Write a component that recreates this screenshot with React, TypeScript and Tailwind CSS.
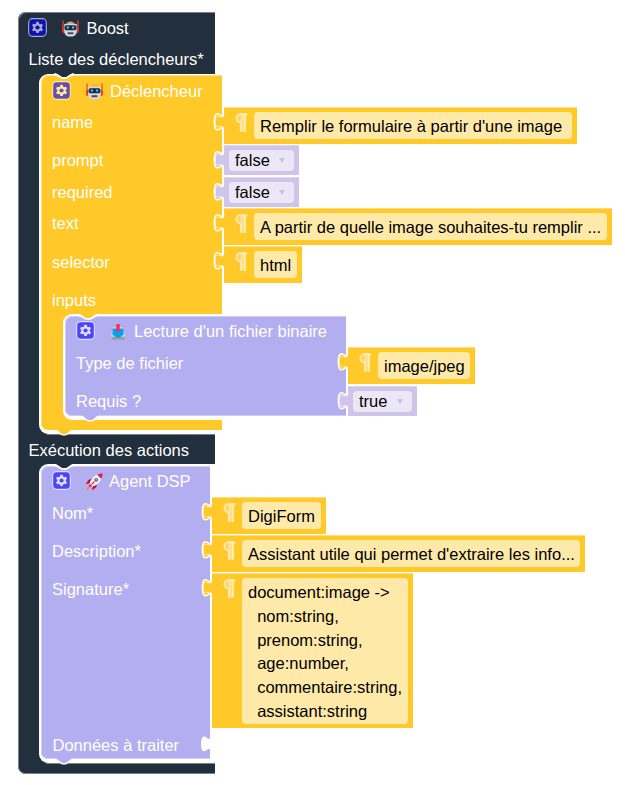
import React from "react";

function Gear({ fill, line }: { fill: string; line: string }) {
  return (
    <svg width="19" height="19" viewBox="-0.6 -0.6 17.2 17.2" className="-mt-[2px] block shrink-0">
      <rect width="16" height="16" rx="3.6" fill={fill} stroke={line} />
      <path
        fill={line}
        d="m4.203,7.296 0,1.368 -0.92,0.677 -0.11,0.41 0.9,1.559 0.41,0.11 1.043,-0.457 1.187,0.683 0.127,1.134 0.3,0.3 1.8,0 0.3,-0.299 0.127,-1.138 1.185,-0.682 1.046,0.458 0.409,-0.11 0.9,-1.559 -0.11,-0.41 -0.92,-0.677 0,-1.366 0.92,-0.677 0.11,-0.41 -0.9,-1.559 -0.409,-0.109 -1.046,0.458 -1.185,-0.682 -0.127,-1.138 -0.3,-0.299 -1.8,0 -0.3,0.3 -0.126,1.135 -1.187,0.682 -1.043,-0.457 -0.41,0.11 -0.899,1.559 0.108,0.409z"
      />
      <circle cx="8" cy="8" r="1.9" fill={fill} />
    </svg>
  );
}

function Robot() {
  return (
    <svg width="17" height="17" viewBox="0 0 18 18" className="block shrink-0">
      <path d="M4.5 3.8Q9-.8 13.5 3.8z" fill="#f9a825" />
      <path d="M1.1.5v9M16.9.5v9" stroke="#f0443a" strokeWidth="1.3" />
      <rect x="0.2" y="7.5" width="2.6" height="6" rx="1" fill="#e8342f" />
      <rect x="15.2" y="7.5" width="2.6" height="6" rx="1" fill="#e8342f" />
      <path d="M2.4 4.3Q9 2.4 15.6 4.3V13Q14.4 17 11.4 17.4H6.6Q3.6 17 2.4 13z" fill="#d3d5df" />
      <rect x="2.8" y="5.5" width="12.4" height="5.3" rx="2" fill="#17283a" />
      <circle cx="6.2" cy="8" r="1.4" fill="#35b8f2" />
      <circle cx="11.8" cy="8" r="1.4" fill="#35b8f2" />
      <rect x="5.8" y="13" width="6.4" height="2" rx="0.7" fill="#4a4c58" />
    </svg>
  );
}

function Inbox() {
  return (
    <svg width="16" height="18" viewBox="0 0 16 18" className="block shrink-0">
      <path d="M2.8 4.5h10.4L14.6 12v3.5H1.4V12z" fill="#e3e4ea" />
      <path d="M1.4 13.6h13.2v3H1.4z" fill="#9b9ba1" />
      <path d="M2.4 5.5h11.2V12L11.4 13l-1.6 1.8H6.2L4.6 13 2.4 12z" fill="#00a6ed" />
      <path d="M6.3 1h3.4v5.2h1.8L8 9.2 4.5 6.2h1.8z" fill="#fb2d5c" />
    </svg>
  );
}

function Rocket() {
  return (
    <svg width="18" height="18" viewBox="0 0 18 18" className="block shrink-0">
      <path d="M4.4 11L.8 17.4 6.8 13.6z" fill="#ff822d" />
      <path d="M7.4 5.6L3.4 7 .8 11.2 5.4 10zM12.4 10.6l-1.4 4-4 2.6L8 12.6z" fill="#ca0b4a" />
      <path d="M4.6 11Q6 4.2 12.6 1.6L16.4 5.4Q14 12 7 13.4z" fill="#f4f4f6" />
      <path d="M12.2 1.8Q14.6.4 17.6.4 17.6 3.4 16.2 5.8z" fill="#e01b52" />
      <path d="M4.8 11l2.2 2.2-1.4.6-1.4-1.4z" fill="#ca0b4a" />
      <circle cx="11.2" cy="6.8" r="1.9" fill="#46536d" />
      <circle cx="11.2" cy="6.8" r="1" fill="#83cbff" />
      <path d="M6.4 11.6l3-3" stroke="#ca0b4a" strokeWidth="1.2" />
    </svg>
  );
}

/* Connector drawn on the left side of a value block */
function Tab({ fill }: { fill: string }) {
  return (
    <svg width="13" height="22" viewBox="0 0 13 22" className="absolute -left-[11px] top-[3px]">
      <path d="M11 2.5c0 11-8.8-8.8-8.8 8.25s8.8-2.75 8.8 8.25" fill="none" stroke="#fffdf5" strokeWidth="3.2" />
      <path d="M13 2.5H11c0 11-8.8-8.8-8.8 8.25s8.8-2.75 8.8 8.25H13z" fill={fill} />
      <path d="M10.5 4.5c-1.5 5.5-8.3-5.5-8.3 6.25 0 8 4 4 7 5" fill="none" stroke="#fff" strokeOpacity=".6" />
    </svg>
  );
}

/* Notch cut in the top edge of a statement block */
function Notch({ fill }: { fill: string }) {
  return (
    <svg width="20" height="6" viewBox="0 0 20 6" className="absolute left-[13px] -top-[2px]">
      <path d="M0 1.3h2l6.2 3.4h4l6-3.4h2" fill="none" stroke="#fff" strokeWidth="2.2" />
      <path d="M2 0l6 3.9h4.2l6-3.9z" fill={fill} />
    </svg>
  );
}

/* Tongue that hangs under the bottom edge of a statement block */
function Tongue({ fill, place = "-bottom-[6px] left-[13px]" }: { fill: string; place?: string }) {
  return (
    <svg width="20" height="7" viewBox="0 0 20 7" className={`absolute ${place}`}>
      <path d="M0 4h4l4 2.6h4L16 4h4V1H0z" fill="#fff" />
      <path d="M1.5 0l6.5 5h4l6.5-5z" fill={fill} />
    </svg>
  );
}

function TextValue({ children, w, h = "h-[37px]", fieldH = "h-[27px]" }: { children: React.ReactNode; w: string; h?: string; fieldH?: string }) {
  return (
    <div className={`relative flex shrink-0 items-start border-t border-[#ffdc7c] bg-[#ffc929] pt-[4px] pr-[5px] pl-[11px] ${w} ${h}`}>
      <Tab fill="#ffc929" />
      <span className="w-[19px] shrink-0 font-['DejaVu_Serif',serif] text-[20px] leading-[21px] text-[#ffd75f] [-webkit-text-stroke:1.4px_#ffebb8]">¶</span>
      <div className={`flex-1 rounded-[4px] bg-[#ffe9a9] pl-[6px] text-[16.5px] leading-[23.8px] whitespace-pre text-black ${fieldH}`}>
        <div className="pt-[3px]">{children}</div>
      </div>
    </div>
  );
}

function Choice({ children, w }: { children: string; w: string }) {
  return (
    <div className={`relative h-[30px] shrink-0 border-t border-[#ded6ee] bg-[#d0c4e8] pt-[4px] pr-[5px] pl-[5px] ${w}`}>
      <Tab fill="#d0c4e8" />
      <div className="flex h-[21px] items-center justify-between rounded-[4px] bg-[#ece7f6] pr-[9px] pl-[6px] text-[16.5px] text-black">
        <span>{children}</span>
        <span className="h-0 w-0 border-x-[3.5px] border-t-[5px] border-x-transparent border-t-[#cdc0e6]" />
      </div>
    </div>
  );
}

function Row({ label, h, labelW, pad = "pt-[3px]", children }: { label: string; h: string; labelW: string; pad?: string; children?: React.ReactNode }) {
  return (
    <div className={`flex items-start ${h}`}>
      <span className={`shrink-0 pl-[11px] leading-[24px] ${pad} ${labelW}`}>{label}</span>
      {children}
    </div>
  );
}

export default function App() {
  return (
    <main className="h-[785px] w-[625px] overflow-hidden bg-white pt-[12px] pl-[18px] font-['Liberation_Sans',Arial,sans-serif] text-[16.5px] text-white">
      <section className="w-[197px] rounded-l-[8px] bg-[#222f3c] shadow-[inset_1px_1px_0_#7a838b,inset_0_-1px_0_#7a838b]">
        <header className="flex h-[32px] items-center pl-[10px]">
          <Gear fill="#0d12ad" line="#a4a9d2" />
          <span className="ml-[15px]"><Robot /></span>
          <span className="ml-[7.5px]">Boost</span>
        </header>
        <div className="h-[30px] pl-[10.5px] leading-[31px] whitespace-nowrap">Liste des déclencheurs*</div>

        <div className="ml-[21px] rounded-l-[9px] bg-white pt-px pb-[4px] pl-[2px]">
          <section className="relative w-[181px] rounded-l-[7px] bg-[#ffc929] shadow-[inset_1px_1px_0_#ffe08a]">
            <Notch fill="#222f3c" />
            <header className="flex h-[32px] items-center pl-[11px]">
              <Gear fill="#6650a5" line="#ffe9a9" />
              <span className="ml-[15px]"><Robot /></span>
              <span className="ml-[7px]">Déclencheur</span>
            </header>
            <Row label="name" h="h-[38px]" labelW="w-[183px]">
              <TextValue w="w-[353px]">Remplir le formulaire à partir d'une image</TextValue>
            </Row>
            <Row label="prompt" h="h-[32px]" labelW="w-[183px]"><Choice w="w-[75px]">false</Choice></Row>
            <Row label="required" h="h-[31px]" labelW="w-[183px]"><Choice w="w-[75px]">false</Choice></Row>
            <Row label="text" h="h-[38px]" labelW="w-[183px]">
              <TextValue w="w-[388px]">A partir de quelle image souhaites-tu remplir ...</TextValue>
            </Row>
            <Row label="selector" h="h-[38px]" labelW="w-[183px]" pad="pt-[4px]"><TextValue w="w-[78px]">html</TextValue></Row>
            <Row label="inputs" h="h-[30px]" labelW="w-[181px]" pad="pt-[4px]" />

            <div className="ml-[22px] rounded-l-[9px] bg-white pt-[2px] pb-[4px] pl-[2px]">
              <section className="relative w-[281px] rounded-l-[7px] bg-[#b3aeef] shadow-[inset_1px_1px_0_#cfccf5,inset_0_-1px_0_#cfccf5]">
                <Notch fill="#ffc929" />
                <header className="flex h-[31px] items-center pl-[11px]">
                  <Gear fill="#4b45fb" line="#e1dfff" />
                  <span className="ml-[15px]"><Inbox /></span>
                  <span className="ml-[8px] whitespace-nowrap">Lecture d'un fichier binaire</span>
                </header>
                <Row label="Type de fichier" h="h-[39px]" labelW="w-[283px]" pad="pt-[4px]"><TextValue w="w-[127px]">image/jpeg</TextValue></Row>
                <Row label="Requis ?" h="h-[30px]" labelW="w-[283px]"><Choice w="w-[69px]">true</Choice></Row>
                <Tongue fill="#b3aeef" place="-bottom-[6px] left-[15px]" />
              </section>
            </div>
            <div className="h-[10px]" />
            <Tongue fill="#ffc929" />
          </section>
        </div>

        <div className="h-[30px] pl-[10.5px] leading-[33px] whitespace-nowrap">
          <div className="-mb-px ml-[18px] h-px bg-[#7a838b]" />
          Exécution des actions
        </div>

        <div className="ml-[21px] rounded-l-[9px] bg-white pt-[2px] pb-[4px] pl-[2px]">
          <section className="relative w-[169px] rounded-l-[7px] bg-[#b3aeef] shadow-[inset_1px_1px_0_#cfccf5,inset_0_-1px_0_#cfccf5]">
            <Notch fill="#222f3c" />
            <header className="flex h-[31px] items-center pl-[11px]">
              <Gear fill="#4b45fb" line="#e1dfff" />
              <span className="ml-[14px]"><Rocket /></span>
              <span className="ml-[6px]">Agent DSP</span>
            </header>
            <Row label="Nom*" h="h-[38px]" labelW="w-[171px]" pad="pt-[4px]"><TextValue w="w-[114px]">DigiForm</TextValue></Row>
            <Row label="Description*" h="h-[38px]" labelW="w-[171px]" pad="pt-[4px]">
              <TextValue w="w-[373px]">Assistant utile qui permet d'extraire les info...</TextValue>
            </Row>
            <Row label="Signature*" h="h-[156px]" labelW="w-[171px]" pad="pt-[4px]">
              <TextValue w="w-[201px]" h="h-[155px]" fieldH="h-[146px]">
                {"document:image ->\n  nom:string,\n  prenom:string,\n  age:number,\n  commentaire:string,\n  assistant:string"}
              </TextValue>
            </Row>
            <div className="relative h-[30px] pl-[11.5px] leading-[32px]">
              Données à traiter
              <svg width="10" height="18" viewBox="0 0 10 18" className="absolute right-0 top-[6px]">
                <path d="M10 4Q8 4 5 1.5 1 .5 1 9t4 7q3-2.5 5-2z" fill="#fff" />
              </svg>
            </div>
            <Tongue fill="#b3aeef" />
          </section>
        </div>
        <div className="h-[11px] pl-[28px]">
          <div className="h-px bg-[#7a838b]" />
        </div>
      </section>
    </main>
  );
}
